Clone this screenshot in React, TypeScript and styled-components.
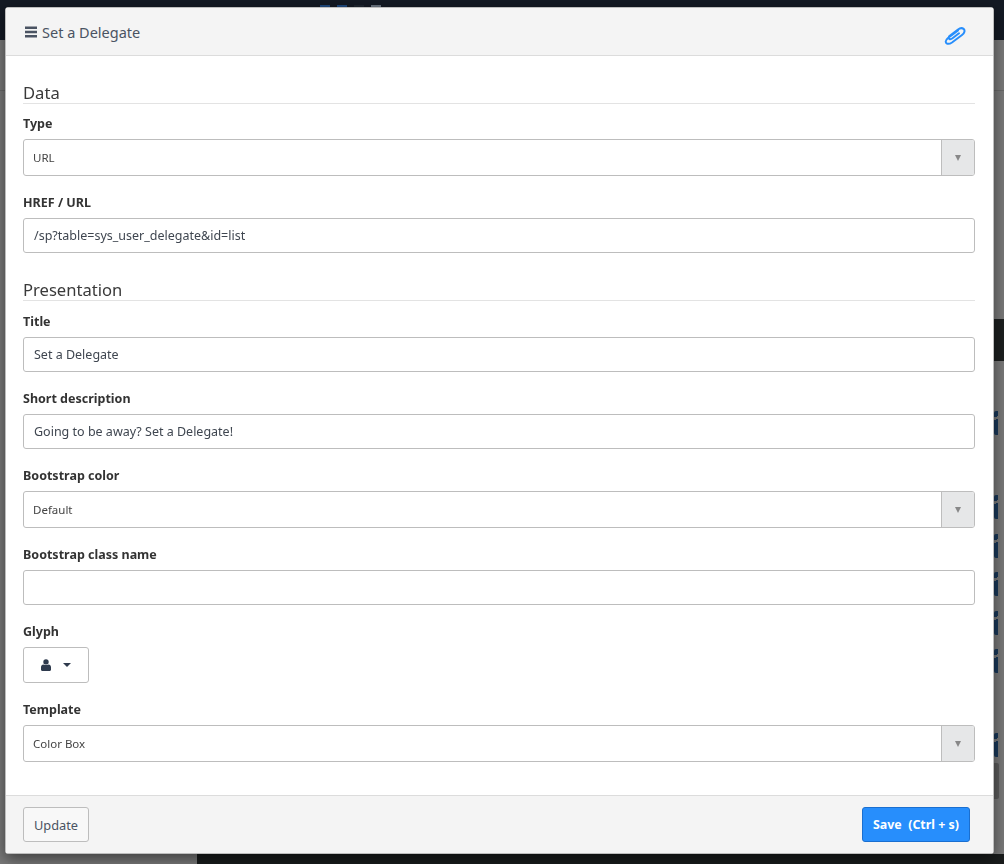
import React from 'react'
import styled, { createGlobalStyle } from 'styled-components'

const GlobalStyle = createGlobalStyle`
  html, body {
    margin: 0;
    padding: 0;
    height: 864px;
    overflow: hidden;
    background: #787878;
    font-family: "Noto Sans", "Open Sans", sans-serif;
  }
  * {
    box-sizing: border-box;
  }
`

/*-- page behind the dialog --*/
const Backdrop = styled.div`
  position: fixed;
  inset: 0;
  display: flex;
  flex-flow: column;
  background: #7a7a7a;
`

const TopBar = styled.div`
  display: flex;
  gap: 7px;
  height: 40px;
  padding: 5px 0 0 320px;
  background: #141a24;
`

const TopBit = styled.div<{ $width: number, $color: string }>`
  width: ${(p) => p.$width}px;
  height: 3px;
  background: ${(p) => p.$color};
`

const Subheader = styled.div`
  height: 51px;
  border-bottom: 1px solid #6a6a6a;
`

const BackdropMiddle = styled.div`
  flex: 1;
  display: flex;
  flex-flow: column;
  align-items: flex-end;
`

const DarkStrip = styled.div`
  width: 10px;
  height: 42px;
  margin-top: 228px;
  background: #1d2020;
`

const Bits = styled.div`
  display: flex;
  flex-flow: column;
  width: 10px;
  margin-top: 50px;
`

const Bit = styled.div<{ $top: number }>`
  width: 4px;
  height: 24px;
  margin-top: ${(p) => p.$top}px;
  background: linear-gradient(155deg, #19385a 26%, #7a7a7a 26%, #7a7a7a 36%, #19385a 36%);
  border-radius: 2px 0 0 2px;
`

const GrayBit = styled.div`
  width: 5px;
  height: 36px;
  margin-top: 6px;
  background: #5c5c5c;
  border-radius: 0 2px 2px 0;
`

const BottomBar = styled.div`
  height: 10px;
  margin-left: 197px;
  background: #191c1c;
`

/*-- dialog --*/
const Modal = styled.div`
  position: relative;
  display: flex;
  flex-flow: column;
  width: 989px;
  height: 847px;
  margin: 7px 0 0 5px;
  background: #fff;
  border: 1px solid #bdbdbd;
  border-radius: 3px;
  box-shadow: 0 5px 15px rgba(0, 0, 0, 0.5);
`

const Header = styled.header`
  display: flex;
  align-items: center;
  justify-content: space-between;
  height: 48px;
  padding: 0 27px 0 19px;
  background: #f4f4f4;
  border-bottom: 1px solid #dcdcdc;
`

const Title = styled.h4`
  display: flex;
  align-items: center;
  gap: 4px;
  margin: 0;
  font-size: 14.5px;
  font-weight: 400;
  color: #4a5362;
`

const ClipSvg = styled.svg`
  margin-top: 9px;
`

const Body = styled.div`
  flex: 1;
  padding: 26px 18px 0 17px;
`

const SectionTitle = styled.h3<{ $first?: boolean }>`
  margin: ${(p) => (p.$first ? '0 0 11px' : '26px 0 12px')};
  font-size: 16.6px;
  line-height: 21px;
  font-weight: 400;
  color: #3a3a3a;
  border-bottom: 1px solid #e3e3e3;
`

const Field = styled.div`
  margin-bottom: 18px;
`

const Label = styled.label`
  display: block;
  margin-bottom: 7px;
  font-size: 12.5px;
  line-height: 17px;
  font-weight: 700;
  color: #333;
`

const Input = styled.div`
  display: flex;
  align-items: center;
  height: 35px;
  padding: 0 10px;
  font-size: 12.5px;
  color: #3f4650;
  border: 1px solid #bdbdbd;
  border-radius: 3px;
`

const SelectBox = styled.div`
  display: flex;
  height: 37px;
  border: 1px solid #bdbdbd;
  border-radius: 3px;
  overflow: hidden;
`

const SelectValue = styled.div`
  flex: 1;
  display: flex;
  align-items: center;
  padding-left: 9px;
  font-size: 11.5px;
  color: #444;
`

const SelectArrow = styled.div`
  display: flex;
  align-items: center;
  justify-content: center;
  width: 33px;
  background: #e6e7e8;
  border-left: 1px solid #bdbdbd;

  &::after {
    content: '';
    border-top: 6px solid #888;
    border-left: 3.5px solid transparent;
    border-right: 3.5px solid transparent;
  }
`

const GlyphButton = styled.div`
  display: flex;
  align-items: center;
  justify-content: center;
  gap: 12px;
  width: 66px;
  height: 36px;
  border: 1px solid #bdbdbd;
  border-radius: 3px;
  color: #2e3a4d;

  &::after {
    content: '';
    border-top: 4px solid #2e3a4d;
    border-left: 4px solid transparent;
    border-right: 4px solid transparent;
  }
`

const Footer = styled.footer`
  display: flex;
  align-items: center;
  justify-content: space-between;
  height: 58px;
  padding: 0 23px 0 17px;
  background: #f4f4f4;
  border-top: 1px solid #dcdcdc;
`

const UpdateButton = styled.button`
  width: 66px;
  height: 35px;
  padding: 0;
  font: 400 12.8px "Noto Sans", sans-serif;
  color: #4a5362;
  background: #f8f8f8;
  border: 1px solid #bdbdbd;
  border-radius: 3px;
`

const SaveButton = styled.button`
  width: 108px;
  height: 35px;
  padding: 0;
  font: 700 12.4px "Noto Sans", sans-serif;
  white-space: pre;
  color: #fff;
  background: #278efc;
  border: 1px solid #1a6fd0;
  border-radius: 3px;
`

const MenuIcon = () => (
  <svg width="13" height="12" viewBox="0 0 13 12">
    <path d="M0 0.5h12v2.4H0zM0 4.8h12v2.4H0zM0 9.1h12v2.4H0z" fill="#4a5362" />
  </svg>
)

const ClipIcon = () => (
  <ClipSvg width="22" height="18" viewBox="0 0 22 18" fill="none" stroke="#278efc" strokeWidth="2" strokeLinecap="round">
    <path d="M14 3.5 L4 11 C1 13.5 1.2 16 3.3 16.7 C5 17.2 6.5 16.5 8 15.5 L18 8 C20.7 6 21.2 3.2 19.6 1.9 C18 0.7 16 1 14 2.5 L5.5 9 C4.5 10 4.5 11.5 5.5 12 C6.5 12.5 7.5 12 8.5 11.3 L15 6.3" />
  </ClipSvg>
)

const UserIcon = () => (
  <svg width="10" height="12" viewBox="0 0 10 12">
    <circle cx="5" cy="2.9" r="2.7" fill="#2e3a4d" />
    <path d="M0 10.8 V8 C0 6.6 1 5.6 2.4 5.4 C3.8 6.2 6.2 6.2 7.6 5.4 C9 5.6 10 6.6 10 8 V10.8 C10 11.5 9.5 12 8.8 12 H1.2 C0.5 12 0 11.5 0 10.8 Z" fill="#2e3a4d" />
  </svg>
)

const TextField = ({ label, value }: { label: string, value?: string }) => (
  <Field>
    <Label>{label}</Label>
    <Input>{value}</Input>
  </Field>
)

const SelectField = ({ label, value }: { label: string, value: string }) => (
  <Field>
    <Label>{label}</Label>
    <SelectBox>
      <SelectValue>{value}</SelectValue>
      <SelectArrow />
    </SelectBox>
  </Field>
)

const App: React.FC = () => {
  return <>
    <GlobalStyle />
    <Backdrop>
      <TopBar>
        <TopBit $width={10} $color='#1f4a80' />
        <TopBit $width={10} $color='#1f4a80' />
        <TopBit $width={10} $color='#1f2630' />
        <TopBit $width={10} $color='#6a7480' />
      </TopBar>
      <Subheader />
      <BackdropMiddle>
        <DarkStrip />
        <Bits>
          {[0, 60, 15, 14, 15, 14, 60].map((top, i) => <Bit key={i} $top={top} />)}
          <GrayBit />
        </Bits>
      </BackdropMiddle>
      <BottomBar />
    </Backdrop>
    <Modal>
      <Header>
        <Title><MenuIcon /> Set a Delegate</Title>
        <ClipIcon />
      </Header>
      <Body>
        <SectionTitle $first>Data</SectionTitle>
        <SelectField label='Type' value='URL' />
        <TextField label='HREF / URL' value='/sp?table=sys_user_delegate&id=list' />
        <SectionTitle>Presentation</SectionTitle>
        <TextField label='Title' value='Set a Delegate' />
        <TextField label='Short description' value='Going to be away? Set a Delegate!' />
        <SelectField label='Bootstrap color' value='Default' />
        <TextField label='Bootstrap class name' />
        <Field>
          <Label>Glyph</Label>
          <GlyphButton><UserIcon /></GlyphButton>
        </Field>
        <SelectField label='Template' value='Color Box' />
      </Body>
      <Footer>
        <UpdateButton>Update</UpdateButton>
        <SaveButton>{'Save  (Ctrl + s)'}</SaveButton>
      </Footer>
    </Modal>
  </>
}

export default App
